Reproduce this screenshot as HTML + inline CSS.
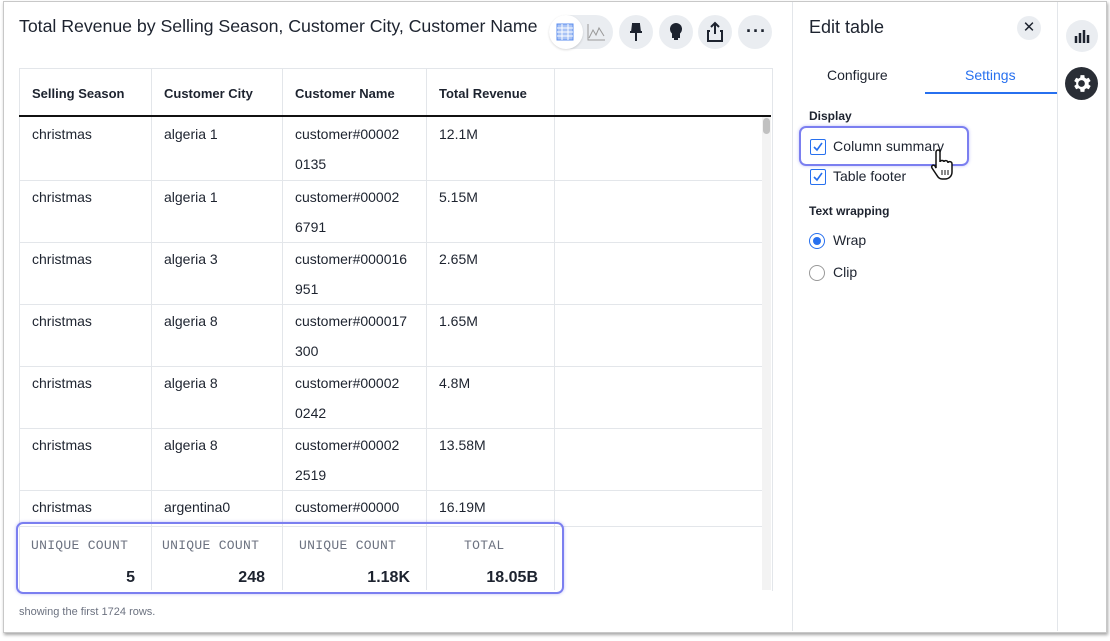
<html><head><style>
body{margin:0;width:1110px;height:641px;background:#fff;font-family:"Liberation Sans",sans-serif;color:#1d232f;position:relative;overflow:hidden}
.win{position:absolute;left:3px;top:1px;width:1102px;height:630px;border:1px solid #c8c8c8;box-shadow:1px 2px 3px rgba(0,0,0,.35);background:#fff}
.a{position:absolute}
.title{left:19px;top:16px;font-size:17.8px;color:#1d232f;letter-spacing:-0.05px}
.btn{width:34px;height:34px;border-radius:50%;background:#eaedf1;top:15px}
.tbl{left:19px;top:68px;width:752px;height:522px;border:1px solid #e3e6ea;border-bottom:none}
.vl{width:1px;background:#e3e6ea}
.hl{height:1px;background:#e3e6ea;left:19px;width:743px}
.th{font-size:13px;font-weight:bold;top:86px}
.td{font-size:14px;line-height:30px}
.sm{font-family:"Liberation Mono",monospace;font-size:13px;color:#6c7280;letter-spacing:0.3px;top:538px}
.sv{font-size:16px;font-weight:bold;top:569px;text-align:right}
.cb{width:14px;height:14px;border:1px solid #2770ef;border-radius:2px}
</style></head><body><div class="win"></div>
<div class="a title">Total Revenue by Selling Season, Customer City, Customer Name</div>
<div class="a" style="left:549px;top:15px;width:64px;height:34px;border-radius:17px;background:#eaedf1"></div>
<div class="a" style="left:549px;top:15px;width:34px;height:34px;border-radius:50%;background:#fff;box-shadow:0 1px 2px rgba(0,0,0,.15)"></div>
<svg class="a" style="left:556px;top:23px" width="18" height="18"><rect x="1" y="1" width="16" height="16" fill="#a9c3f5" stroke="#5b8def"/><path d="M1 5H17M1 9H17M1 13H17M6 1V17M12 1V17" stroke="#fff"/></svg>
<svg class="a" style="left:586px;top:22px" width="20" height="20"><path d="M2 2V18H19M3 16L7 8L10 13L13 6L18 14" fill="none" stroke="#999" stroke-width="1"/></svg>
<div class="a btn" style="left:619px"></div><svg class="a" style="left:627px;top:22px" width="18" height="20"><path d="M5 2H13M6 2L5 10H13L12 2M3 10H15M9 10V19" stroke="#1d232f" stroke-width="2" fill="#1d232f"/></svg>
<div class="a btn" style="left:659px"></div><svg class="a" style="left:668px;top:22px" width="16" height="20"><circle cx="8" cy="7" r="6" fill="#1d232f"/><path d="M5 12H11V15H5ZM6 17H10" stroke="#1d232f" stroke-width="2" fill="#1d232f"/></svg>
<div class="a btn" style="left:698px"></div><svg class="a" style="left:707px;top:21px" width="16" height="22"><path d="M8 2V13M4 6L8 2L12 6M3 10H1V20H15V10H13" stroke="#1d232f" stroke-width="2" fill="none"/></svg>
<div class="a btn" style="left:738px"></div><div class="a" style="left:746px;top:21px;font-size:18px;font-weight:bold;letter-spacing:1px">···</div>
<div class="a tbl"></div>
<div class="a vl" style="left:151px;top:68px;height:522px"></div>
<div class="a vl" style="left:282px;top:68px;height:522px"></div>
<div class="a vl" style="left:426px;top:68px;height:522px"></div>
<div class="a vl" style="left:554px;top:68px;height:522px"></div>
<div class="a" style="left:19px;top:115px;width:752px;height:2px;background:#111"></div>
<div class="a" style="left:762px;top:117px;width:9px;height:473px;background:#f3f3f3"></div>
<div class="a" style="left:763px;top:118px;width:7px;height:16px;border-radius:4px;background:#c1c1c1"></div>
<div class="a th" style="left:32px">Selling Season</div><div class="a th" style="left:164px">Customer City</div><div class="a th" style="left:295px">Customer Name</div><div class="a th" style="left:439px">Total Revenue</div>
<div class="a hl" style="top:180px"></div><div class="a hl" style="top:242px"></div><div class="a hl" style="top:304px"></div><div class="a hl" style="top:366px"></div><div class="a hl" style="top:428px"></div><div class="a hl" style="top:490px"></div><div class="a hl" style="top:526px"></div>
<div class="a td" style="left:32px;top:119px">christmas</div><div class="a td" style="left:164px;top:119px">algeria 1</div><div class="a td" style="left:295px;top:119px">customer#00002<br>0135</div><div class="a td" style="left:439px;top:119px">12.1M</div>
<div class="a td" style="left:32px;top:182px">christmas</div><div class="a td" style="left:164px;top:182px">algeria 1</div><div class="a td" style="left:295px;top:182px">customer#00002<br>6791</div><div class="a td" style="left:439px;top:182px">5.15M</div>
<div class="a td" style="left:32px;top:244px">christmas</div><div class="a td" style="left:164px;top:244px">algeria 3</div><div class="a td" style="left:295px;top:244px">customer#000016<br>951</div><div class="a td" style="left:439px;top:244px">2.65M</div>
<div class="a td" style="left:32px;top:306px">christmas</div><div class="a td" style="left:164px;top:306px">algeria 8</div><div class="a td" style="left:295px;top:306px">customer#000017<br>300</div><div class="a td" style="left:439px;top:306px">1.65M</div>
<div class="a td" style="left:32px;top:368px">christmas</div><div class="a td" style="left:164px;top:368px">algeria 8</div><div class="a td" style="left:295px;top:368px">customer#00002<br>0242</div><div class="a td" style="left:439px;top:368px">4.8M</div>
<div class="a td" style="left:32px;top:430px">christmas</div><div class="a td" style="left:164px;top:430px">algeria 8</div><div class="a td" style="left:295px;top:430px">customer#00002<br>2519</div><div class="a td" style="left:439px;top:430px">13.58M</div>
<div class="a td" style="left:32px;top:492px">christmas</div><div class="a td" style="left:164px;top:492px">argentina0</div><div class="a td" style="left:295px;top:492px">customer#00000</div><div class="a td" style="left:439px;top:492px">16.19M</div>
<div class="a" style="left:20px;top:527px;width:742px;height:63px;background:#fff"></div>
<div class="a vl" style="left:151px;top:527px;height:63px"></div><div class="a vl" style="left:282px;top:527px;height:63px"></div><div class="a vl" style="left:426px;top:527px;height:63px"></div><div class="a vl" style="left:554px;top:527px;height:63px"></div>
<div class="a sm" style="left:31px">UNIQUE COUNT</div><div class="a sm" style="left:162px">UNIQUE COUNT</div><div class="a sm" style="left:299px">UNIQUE COUNT</div><div class="a sm" style="left:464px">TOTAL</div>
<div class="a sv" style="left:60px;width:75px">5</div><div class="a sv" style="left:180px;width:85px">248</div><div class="a sv" style="left:300px;width:110px">1.18K</div><div class="a sv" style="left:440px;width:98px">18.05B</div>
<div class="a" style="left:16px;top:522px;width:544px;height:68px;border:2px solid #7b7ff0;border-radius:7px;box-shadow:0 0 3px rgba(100,100,240,.4)"></div>
<div class="a" style="left:19px;top:606px;font-size:11px;color:#6c7280">showing the first 1724 rows.</div>
<div class="a vl" style="left:792px;top:2px;height:629px"></div>
<div class="a vl" style="left:1057px;top:2px;height:629px"></div>
<div class="a" style="left:809px;top:17px;font-size:18px">Edit table</div>
<div class="a" style="left:1017px;top:16px;width:24px;height:24px;border-radius:50%;background:#eaedf1;text-align:center;line-height:24px;font-size:15px">✕</div>
<div class="a" style="left:827px;top:67px;font-size:14px">Configure</div>
<div class="a" style="left:965px;top:67px;font-size:14px;color:#2770ef">Settings</div>
<div class="a" style="left:925px;top:92px;width:132px;height:2px;background:#2770ef"></div>
<div class="a" style="left:809px;top:109px;font-size:12px;font-weight:bold">Display</div>
<div class="a" style="left:799px;top:126px;width:166px;height:36px;border:2px solid #7b7ff0;border-radius:7px;box-shadow:0 0 3px rgba(100,100,240,.4)"></div>
<div class="a cb" style="left:810px;top:139px"></div><svg class="a" style="left:811px;top:140px" width="14" height="14"><path d="M3 7L6 10L11 3" stroke="#2770ef" stroke-width="1.6" fill="none"/></svg>
<div class="a" style="left:833px;top:138px;font-size:14px;letter-spacing:0.1px">Column summary</div>
<div class="a cb" style="left:810px;top:169px"></div><svg class="a" style="left:811px;top:170px" width="14" height="14"><path d="M3 7L6 10L11 3" stroke="#2770ef" stroke-width="1.6" fill="none"/></svg>
<div class="a" style="left:833px;top:168px;font-size:14px">Table footer</div>
<svg class="a" style="left:930px;top:148px" width="28" height="34"><path d="M8 2C9.5 2 10 3 10 4V14C10 12 14 12 14 14C14 12 18 12 18 15C18 13 22 13 22 16V24C22 28 19 31 15 31H12C9 31 8 29 6 26L2 20C1 18 3 16 5 18L6 20V4C6 3 7 2 8 2Z" fill="#fff" stroke="#111" stroke-width="1.5"/><path d="M12 22V27M15 22V27M18 22V27" stroke="#111"/></svg>
<div class="a" style="left:809px;top:204px;font-size:12px;font-weight:bold">Text wrapping</div>
<div class="a" style="left:809px;top:233px;width:14px;height:14px;border:1px solid #2770ef;border-radius:50%"></div><div class="a" style="left:813px;top:237px;width:8px;height:8px;border-radius:50%;background:#2770ef"></div>
<div class="a" style="left:833px;top:232px;font-size:14px">Wrap</div>
<div class="a" style="left:809px;top:265px;width:14px;height:14px;border:1px solid #999;border-radius:50%"></div>
<div class="a" style="left:833px;top:264px;font-size:14px">Clip</div>
<div class="a" style="left:1066px;top:20px;width:32px;height:32px;border-radius:50%;background:#eaedf1"></div>
<svg class="a" style="left:1074px;top:28px" width="16" height="16"><path d="M2 8V15M6 5V15M10 2V15M14 7V15" stroke="#1d232f" stroke-width="2.5"/></svg>
<div class="a" style="left:1065px;top:67px;width:33px;height:33px;border-radius:50%;background:#2a2e36"></div>
<svg class="a" style="left:1070px;top:72px" width="23" height="23" viewBox="0 0 24 24"><path fill="#fff" d="M19.4 13a7.5 7.5 0 0 0 0-2l2.1-1.6-2-3.4-2.5 1a7 7 0 0 0-1.7-1L15 3.3h-4L10.6 6a7 7 0 0 0-1.7 1l-2.5-1-2 3.4L6.5 11a7.5 7.5 0 0 0 0 2l-2.1 1.6 2 3.4 2.5-1a7 7 0 0 0 1.7 1l.4 2.7h4l.4-2.7a7 7 0 0 0 1.7-1l2.5 1 2-3.4zM12 15.5a3.5 3.5 0 1 1 0-7 3.5 3.5 0 0 1 0 7z"/></svg>
</body></html>
